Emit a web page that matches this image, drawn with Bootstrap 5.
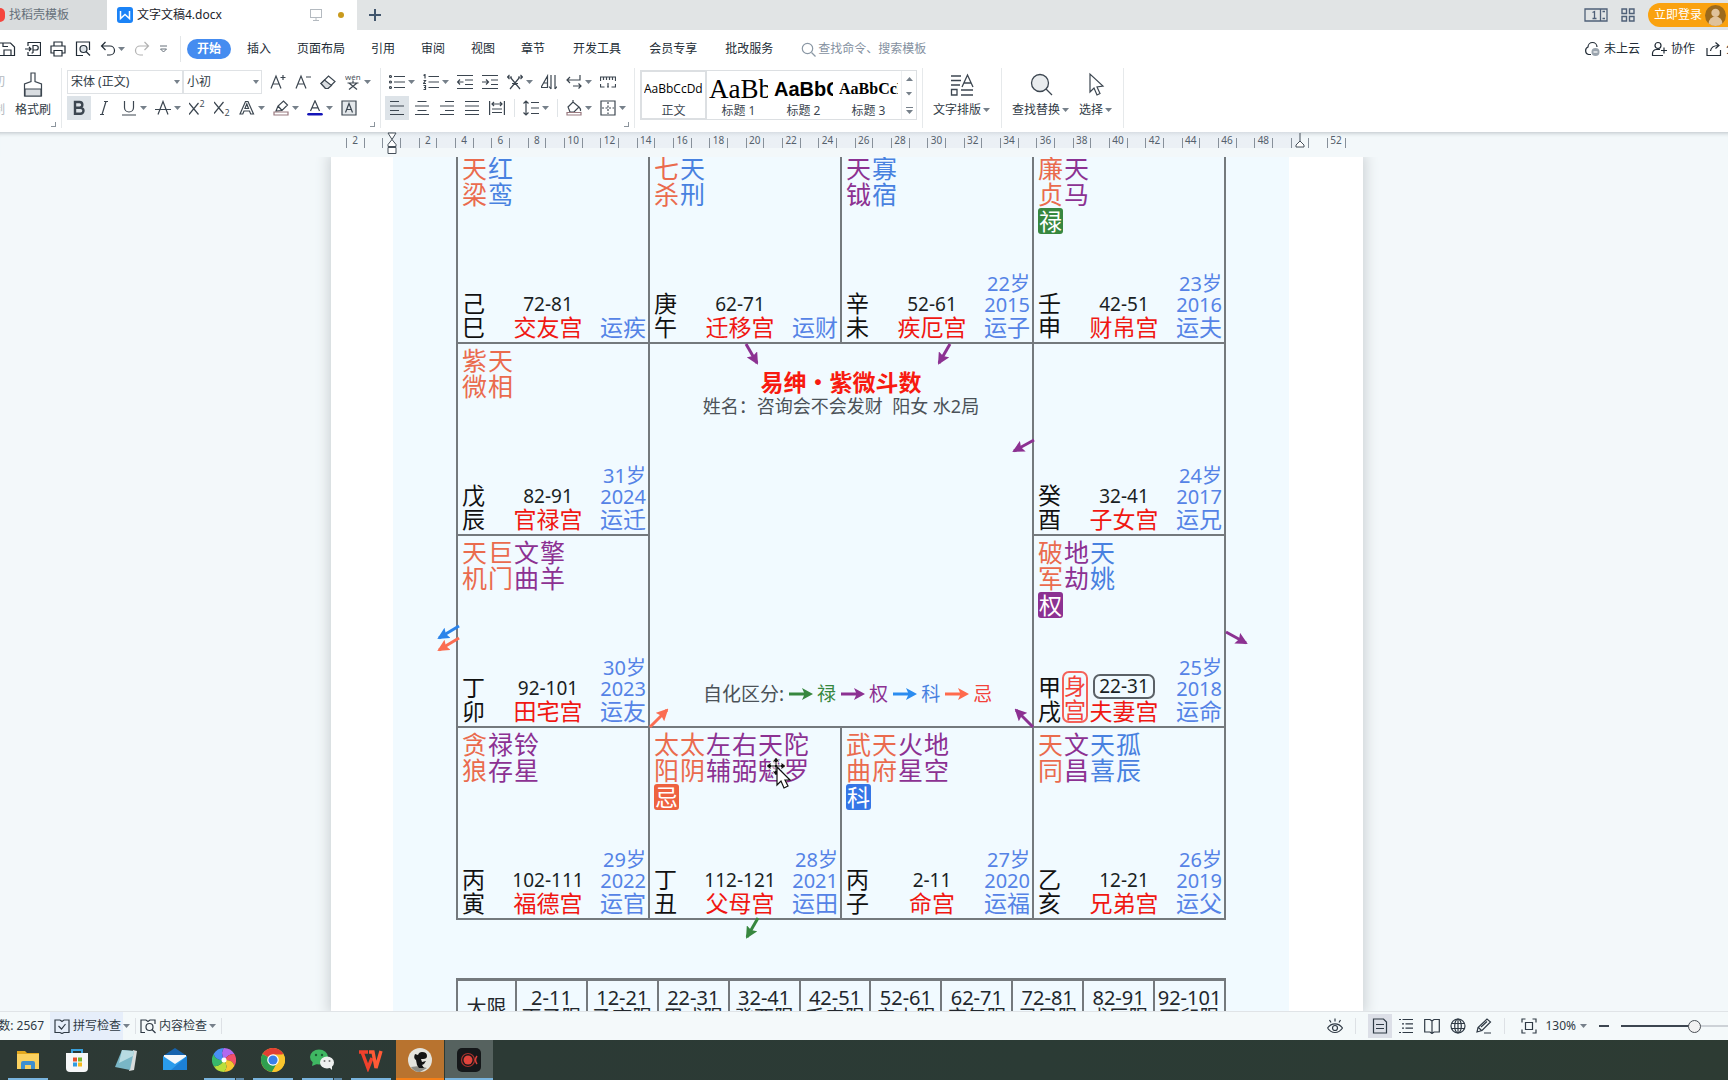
<!DOCTYPE html>
<html lang="zh-CN">
<head>
<meta charset="utf-8">
<meta name="viewport" content="width=device-width, initial-scale=1">
<title>文字文稿4.docx</title>
<link rel="stylesheet" href="https://cdn.jsdelivr.net/npm/bootstrap@5.3.0/dist/css/bootstrap.min.css">
<script src="https://cdn.jsdelivr.net/npm/bootstrap@5.3.0/dist/js/bootstrap.bundle.min.js"></script>
<style>
  body { font: 12px/16px "Noto Sans", "Noto Sans CJK SC", sans-serif; color: #2f3a45; background: #fff; overflow: hidden; }
  a { color: inherit; text-decoration: none; }
  button { border: 0; background: none; padding: 0; color: inherit; }
  svg { display: block; flex: none; }
  .ic { width: 16px; height: 16px; fill: none; stroke: currentColor; stroke-width: 1.2; }
  .ic text { font-family: "Open Sans", sans-serif; fill: currentColor; stroke: none; }
  .dn { width: 7px; height: 4px; background: #76808a; clip-path: polygon(0 0, 100% 0, 50% 100%); flex: none; }
  .up { transform: rotate(180deg); }

  /* title bar */
  .titlebar { height: 30px; background: #e1e4e5; flex: none; }
  .doc-tab { height: 30px; }
  .tab-home { width: 107px; background: #d9dcdd; color: #66707a; gap: 4px; }
  .tab-home .dot { width: 5px; height: 14px; background: #f5453d; border-radius: 0 7px 7px 0; }
  .tab-doc { width: 250px; background: #fff; color: #1c232b; padding: 0 13px 0 10px; }
  .unsaved { width: 6px; height: 6px; border-radius: 50%; background: #c99a1d; }
  .win-tools { gap: 13px; }
  .login { height: 24px; background: #faa20f; color: #fff; border-radius: 12px 0 0 12px; padding: 0 2px 0 6px; gap: 3px; }

  /* menu row */
  .menubar { height: 38px; flex: none; color: #222c36; }
  .quick { width: 181px; border-right: 1px solid #e3e6e8; height: 26px; gap: 9px; }
  .quick .undo { gap: 2px; }
  .menu-tabs { gap: 6px; margin-left: 6px; }
  .menu-more { gap: 8px; margin-left: 8px; }
  .menubar .nav-link { padding: 2px 10px; border-radius: 10px; color: #222c36; line-height: 16px; }
  .menubar .nav-link.active { background: #458cf0; color: #fff; font-weight: 700; }
  .search-box { margin-left: 18px; color: #8b98a5; gap: 2px; }
  .search-box input { border: 0; padding: 0; width: 112px; font-size: 12px; outline: 0; }
  .search-box input::placeholder { color: #8490a0; opacity: 1; }
  .menu-right { gap: 11px; width: 144px; overflow: hidden; }
  .menu-right button { gap: 4px; white-space: nowrap; flex: none; }

  /* ribbon */
  .ribbon { height: 64px; flex: none; overflow: hidden; color: #3c4650; }
  .grp { height: 60px; border-right: 1px solid #e6e9eb; padding: 2px 5px 0; position: relative; flex: none; }
  .grp-clip { width: 62px; padding: 2px 0 0; gap: 10px; }
  .grp-font { padding-right: 6px; }
  .grp-para { padding-left: 4px; }
  .grp-wide { padding: 2px 11px 0 10px; gap: 10px; }
  .grp-corner::after { content: ""; position: absolute; right: 5px; bottom: 1px; width: 5px; height: 5px; border: solid #8b949c; border-width: 0 1px 1px 0; }
  .tool-row { gap: 1px; height: 24px; }
  .tool-row + .tool-row { margin-top: 2px; }
  .tb { height: 24px; padding: 0 4px; display: flex; align-items: center; }
  .tb.drop { padding-right: 3px; gap: 3px; }
  .tb.on { background: #dde3e8; }
  .rule { width: 8px; height: 18px; background: linear-gradient(#e0e4e7, #e0e4e7) center / 1px 100% no-repeat; }
  .pick { position: relative; height: 24px; }
  .pick::after { content: ""; position: absolute; right: 3px; top: 10px; border: 3px solid transparent; border-top: 4px solid #76808a; border-bottom: 0; }
  .pick select { appearance: none; width: 100%; height: 24px; border: 1px solid #dfe2e5; background: #fff; padding: 0 3px; font-size: 12px; color: #2f3a45; }
  .pick-font { width: 116px; }
  .pick-size { width: 79px; margin-left: -1px; margin-right: 3px; }
  .cutoff { color: #b4babf; width: 5px; overflow: hidden; direction: rtl; white-space: nowrap; padding: 0; }
  .big { display: flex; flex-direction: column; align-items: center; gap: 5px; padding-top: 2px; color: #2f3a45; }
  .big .cap { display: flex; align-items: center; gap: 2px; line-height: 16px; }
  .gallery { width: 277px; height: 50px; border: 1px solid #dcdfe2; }
  .look { width: 65px; height: 48px; overflow: hidden; padding: 0 3px; }
  .look.on { outline: 2px solid #dcdfe2; outline-offset: -1px; }
  .look .sample { height: 32px; color: #000; overflow: hidden; white-space: nowrap; text-align: left; display: block; }
  .look .lbl { display: block; line-height: 14px; text-align: center; }
  .smp1 { font: 12px/34px "Open Sans", sans-serif; }
  .smp2 { font: 27px/34px "Liberation Serif", serif; }
  .smp3 { font: bold 20px/34px "Liberation Sans", sans-serif; }
  .smp4 { font: bold 16px/34px "Liberation Serif", serif; }
  .gal-nav { width: 15px; border-left: 1px solid #eceef0; }

  /* ruler and workspace */
  .desk { background: #f3f8fa; padding-right: 34px; }
  .ruler-strip { height: 25px; flex: none; box-shadow: inset 0 5px 4px -4px #b9c0c5; }
  .ruler { width: 1032px; height: 16px; padding-left: 15px; position: relative;
           background: linear-gradient(#e3e8f080, #e3e8f080) 62px 0 / 907px 100% no-repeat; }
  .ruler span { flex: 1; height: 10px; margin-top: 6px; font-size: 10px; line-height: 5px; color: #55606c; padding-right: 18px; text-align: center;
                background: linear-gradient(#87909a, #87909a) 0 0 / 1px 100% no-repeat, linear-gradient(#87909a, #87909a) 50% 0 / 1px 100% no-repeat; }
  .stop { position: absolute; top: 0; color: #46505a; }
  .stop-l { left: 55px; } .stop-r { left: 963px; }
  .work { overflow: hidden; min-height: 0; }
  .paper { width: 1032px; background: #fff; padding: 0 74px 0 62px; box-shadow: 0 0 12px 3px #cfd4d7; }
  .scan { background: #f1faff; padding: 0 63px; height: 100%; overflow: hidden; }

  /* star chart */
  .chart { position: relative; margin-top: -7px; display: grid; grid-template-columns: repeat(4, 192px); grid-template-rows: repeat(4, 192px);
           width: 770px; border: solid #74797d; border-width: 0 2px 2px 0; }
  .house { border: solid #74797d; border-width: 2px 0 0 2px; padding: 3px 2px 3px 4px; display: flex; flex-direction: column; justify-content: space-between; }
  .court { grid-area: 2 / 2 / 4 / 4; border: solid #74797d; border-width: 2px 0 0 2px; padding: 25px 0 19px; display: flex; flex-direction: column; }
  .star { width: 26px; font-size: 25px; line-height: 26px; }
  .hua { display: block; width: 25px; height: 26px; margin-top: 1px; border-radius: 3px; color: #fff; font-size: 23px; text-align: center; }
  .c-or { color: #ea6b4e; } .c-pu { color: #8c3192; } .c-bl { color: #4881e0; } .c-gr { color: #37873f; } .c-rd { color: #f3423a; }
  .b-gr { background: #37873f; } .b-pu { background: #8c3192; } .b-bl { background: #3576e6; } .b-or { background: #ee623f; }
  .foot { display: grid; grid-template-columns: 24px 26px 72px 62px; align-items: end; }
  .stem { font-size: 23px; line-height: 24px; color: #111; }
  .body-mark { border: 2px solid #f5625a; border-radius: 7px; color: #f3423a; font-size: 22px; line-height: 24px; height: 52px; text-align: center; }
  .mid { text-align: center; color: #f01712; font-size: 23px; line-height: 23px; white-space: nowrap; }
  .span { display: block; color: #1a1f24; font-size: 19px; }
  .ringed { outline: 2px solid #5b6167; border-radius: 5px; margin: 0 7px 3px; line-height: 21px; }
  .yr { text-align: right; color: #5583e6; font-size: 20px; line-height: 21px; white-space: nowrap; }
  .yr b { display: block; font-weight: 400; font-size: 23px; line-height: 24px; }
  .chart-title { color: #f81a10; font: bold 23px/24px "Noto Sans CJK SC", sans-serif; margin: 0; }
  .chart-sub { font-size: 18px; line-height: 26px; color: #4b5258; white-space: pre; }
  .legend { font-size: 19px; line-height: 26px; color: #4b5258; padding-left: 53px; gap: 5px; }
  .legend > span { display: flex; align-items: center; gap: 4px; }
  .over { position: absolute; left: 0; top: 0; overflow: visible; }
  .limits { margin-top: 58px; width: 770px; table-layout: fixed; border-collapse: collapse; font-size: 20px; line-height: 20px; color: #22272c; text-align: center; }
  .limits th { width: 59px; font-weight: 400; }
  .limits th, .limits td { border: 2px solid #74797d; border-top-width: 3px; padding: 7px 0; white-space: nowrap; }

  /* status bar */
  .status { height: 29px; flex: none; background: #f4f9fa; border-top: 1px solid #e0e4e7; overflow: hidden; }
  .words { width: 50px; direction: rtl; white-space: nowrap; overflow: hidden; padding-right: 6px; }
  .chk { height: 28px; padding: 0 2px 0 4px; gap: 3px; }
  .chk.on { background: #e6eefa; }
  .vline { width: 1px; height: 16px; background: #dde1e5; }
  .chk + .dn { margin-right: 5px; }
  .view { width: 24px; height: 24px; display: flex; align-items: center; justify-content: center; }
  .view.on { background: #dcdfe7; }
  .views { gap: 2px; }
  .zoomer { appearance: none; width: 107px; height: 14px; margin: 0; background: linear-gradient(90deg, #3c4650 72px, #cdd2d7 72px) center / 100% 2px no-repeat; }
  .zoomer::-webkit-slider-thumb { appearance: none; width: 13px; height: 13px; border-radius: 50%; background: #f2f2f2; border: 1px solid #4a4f55; }

  /* taskbar */
  .taskbar { height: 40px; flex: none; background: linear-gradient(90deg, #2d3935, #2b3b35 60%, #2d3b33); padding-left: 4px; gap: 1px; }
  .app { width: 48px; height: 40px; display: flex; align-items: center; justify-content: center; position: relative; }
  .app svg { width: 24px; height: 24px; }
  .run::after { content: ""; position: absolute; left: 4px; right: 4px; bottom: 0; height: 2px; background: #79b4de; }
  .multi::after { background: linear-gradient(90deg, #79b4de 31px, #2d3935 31px 32px, #5b87a6 32px); }
  .hot { background: #b8732f; } .hot::after { left: 0; right: 0; background: #f57f17; }
  .cur { background: #56625f; } .cur::after { left: 0; right: 0; }
</style>
</head>
<body class="d-flex flex-column vh-100">

<header class="titlebar d-flex align-items-center">
  <a href="#" class="doc-tab tab-home d-flex align-items-center"><span class="dot"></span>找稻壳模板</a>
  <a href="#" class="doc-tab tab-doc d-flex align-items-center">
    <svg width="16" height="16" viewBox="0 0 16 16"><rect width="16" height="16" rx="3" fill="#1b83f7"/><path d="M3.500 4v7.500l4.500-4 4.500 4V4" fill="none" stroke="#fff" stroke-width="1.500"/></svg>
    <span class="ms-1 me-auto">文字文稿4.docx</span>
    <svg class="me-3" width="12" height="12" viewBox="0 0 12 12" fill="none" stroke="#b4bac0"><rect x=".5" y=".5" width="11" height="8"/><path d="M6 9v2.500M3 11.500h6"/></svg>
    <span class="unsaved"></span>
  </a>
  <button class="ms-2 px-1" aria-label="新建"><svg width="12" height="12" viewBox="0 0 12 12" stroke="#42566d" stroke-width="2"><path d="M6 0v12M0 6h12"/></svg></button>
  <div class="win-tools ms-auto d-flex align-items-center">
    <button aria-label="窗口布局"><svg width="24" height="14" viewBox="0 0 24 14" fill="none" stroke="#4f6078" stroke-width="1.300"><path d="M1 1h22v12H1z"/><path d="M8.500 4.500l2-1v7M8.500 10.500h4M16.500 1v12"/><path d="M18.500 3.500h2.500M18.500 10.500h2.500"/></svg></button>
    <button aria-label="应用"><svg width="14" height="14" viewBox="0 0 14 14" fill="none" stroke="#4f6078" stroke-width="1.400"><path d="M1 1h4.500v4.500H1zM8.500 1H13v4.500H8.500zM1 8.500h4.500V13H1zM8.500 8.500H13V13H8.500z"/></svg></button>
    <button class="login d-flex align-items-center">立即登录
      <svg width="21" height="21" viewBox="0 0 20 20"><circle cx="10" cy="10" r="10" fill="#9c6a1c"/><circle cx="10" cy="7.500" r="4" fill="#dfc29a"/><path d="M3.500 17.500a6.500 6.500 0 0 1 13 0A10 10 0 0 1 3.500 17.500z" fill="#dfc29a"/></svg></button>
  </div>
</header>

<nav class="menubar d-flex align-items-center">
  <div class="quick d-flex align-items-center">
    <button aria-label="保存"><svg class="ic" viewBox="0 0 16 16"><path d="M0 2h10.500L14.500 6v8.500H0M4 14V9h7v5M3 2v3.500h5"/></svg></button>
    <button aria-label="输出"><svg class="ic" viewBox="0 0 16 16"><path d="M3 5V1.500h12.500v13H3V11M0 8h6M4 6l2 2-2 2M8 12V4.500h3a2.200 2.200 0 0 1 0 4.500H8M8 12H6.500"/></svg></button>
    <button aria-label="打印"><svg class="ic" viewBox="0 0 16 16"><path d="M4 5V1h8v4M4 12H1V5h14v7h-3M4 9.500h8V15H4z"/></svg></button>
    <button aria-label="预览"><svg class="ic" viewBox="0 0 16 16"><path d="M8 14.500H1.500V1h13v8"/><circle cx="8.500" cy="8" r="3.500" fill="#dde3e8"/><path d="M11 10.500l4 4"/></svg></button>
    <button class="undo d-flex align-items-center" aria-label="撤销"><svg class="ic" viewBox="0 0 16 16"><path d="M5.500 1L1.500 5l4 4M1.500 5H10a4.500 4.500 0 0 1 0 9H7"/></svg><span class="dn"></span></button>
    <button aria-label="恢复"><svg class="ic text-black-50" viewBox="0 0 16 16" opacity=".6"><path d="M10.500 1l4 4-4 4M14.500 5H6a4.500 4.500 0 0 0 0 9h3"/></svg></button>
    <button aria-label="更多"><svg width="9" height="9" viewBox="0 0 9 9" fill="none" stroke="#66707a"><path d="M1 1h7M1.500 4h6L4.500 7z"/></svg></button>
  </div>
  <div class="menu-tabs nav flex-nowrap">
    <a href="#" class="nav-link active">开始</a><a href="#" class="nav-link">插入</a><a href="#" class="nav-link">页面布局</a><a href="#" class="nav-link">引用</a><a href="#" class="nav-link">审阅</a><a href="#" class="nav-link">视图</a><a href="#" class="nav-link">章节</a>
  </div>
  <div class="menu-more nav flex-nowrap">
    <a href="#" class="nav-link">开发工具</a><a href="#" class="nav-link">会员专享</a><a href="#" class="nav-link">批改服务</a>
  </div>
  <label class="search-box d-flex align-items-center">
    <svg width="15" height="15" viewBox="0 0 15 15" fill="none" stroke="#8b98a5" stroke-width="1.200"><circle cx="6.500" cy="6.500" r="5.200"/><path d="M10.500 10.500l4 4"/></svg>
    <input type="text" placeholder="查找命令、搜索模板" aria-label="查找命令、搜索模板">
  </label>
  <div class="menu-right d-flex align-items-center ms-auto">
    <button class="d-flex align-items-center"><svg class="ic" viewBox="0 0 16 16"><path d="M7 13.500H4.500a4 4 0 0 1-.5-7.500 4.500 4.500 0 0 1 9 0"/><circle cx="11.500" cy="11" r="4" fill="#9aa4ae" stroke="none"/><path d="M9.500 11h4" stroke="#fff"/></svg>未上云</button>
    <button class="d-flex align-items-center"><svg class="ic" viewBox="0 0 16 16"><circle cx="7" cy="4.500" r="3"/><path d="M12 14.500H1.500v-2a4 4 0 0 1 4-4H9M13 6.500v6M10 9.500h6"/></svg>协作</button>
    <button class="d-flex align-items-center"><svg class="ic" viewBox="0 0 16 16"><path d="M1 7v7.500h13.500V9M4.500 10c.5-3.500 3-5.500 8-5.500M9.500 1.500l3.500 3-3.500 3"/></svg>分享</button>
  </div>
</nav>

<section class="ribbon d-flex">
  <div class="grp grp-corner grp-clip d-flex">
    <div class="d-flex flex-column"><button class="tb cutoff">剪切</button><button class="tb cutoff mt-1">复制</button></div>
    <button class="big"><svg width="20" height="25" viewBox="0 0 20 25" fill="none" stroke="#3c4650" stroke-width="1.200"><path d="M8 1h4v8.500l6.500 2.500v12h-17V12L8 9.500z"/><path d="M2 17h16v7H2z" fill="#d9dde1"/></svg><span>格式刷</span></button>
  </div>

  <div class="grp grp-corner grp-font">
    <div class="tool-row d-flex">
      <div class="pick pick-font"><select aria-label="字体"><option>宋体 (正文)</option></select></div>
      <div class="pick pick-size"><select aria-label="字号"><option>小初</option></select></div>
      <button class="tb" aria-label="增大字号"><svg class="ic" viewBox="0 0 16 16"><path d="M1 14.500L6 2l5 12.500M3 10h6.500M13 1v5M10.500 3.500h5"/></svg></button>
      <button class="tb" aria-label="减小字号"><svg class="ic" viewBox="0 0 16 16"><path d="M1 14.500L6 2l5 12.500M3 10h6.500M11 3h5"/></svg></button>
      <button class="tb" aria-label="清除格式"><svg class="ic" viewBox="0 0 16 16"><path d="M1 9.500L8.500 2 15 7.500 8 14.500H5.500z"/><path d="M1 9.500L4.500 6 11.500 11.500 8 14.500H5.500z" fill="#d9dde1"/></svg></button>
      <button class="tb drop" aria-label="拼音指南"><svg class="ic" viewBox="0 0 16 16"><text x="0" y="6" font-size="8">wén</text><path d="M8 6.500v2M2.500 9h11M4 9l8 6.500M12 9l-8 6.500"/></svg><span class="dn"></span></button>
    </div>
    <div class="tool-row d-flex">
      <button class="tb on" aria-label="加粗"><svg class="ic" viewBox="0 0 16 16"><path d="M4 2h4.500a2.800 2.800 0 0 1 0 5.700H4zM4 7.700h5.500a3 3 0 0 1 0 6H4z" stroke-width="2.400"/></svg></button>
      <button class="tb" aria-label="斜体"><svg class="ic" viewBox="0 0 16 16"><path d="M8 1.500h4M4 14.500h4M10 1.500l-4 13"/></svg></button>
      <button class="tb drop" aria-label="下划线"><svg class="ic" viewBox="0 0 16 16"><path d="M3.500 1v6.500a4.500 4.500 0 0 0 9 0V1M1 15h14"/></svg><span class="dn"></span></button>
      <button class="tb drop" aria-label="删除线"><svg class="ic" viewBox="0 0 16 16"><path d="M3 14.500L8 1.500l5 13M0 9.500h16"/></svg><span class="dn"></span></button>
      <button class="tb" aria-label="上标"><svg class="ic" viewBox="0 0 16 16"><path d="M0 3l9.500 11.500M9.500 3L0 14.500"/><text x="10.500" y="7" font-size="9">2</text></svg></button>
      <button class="tb" aria-label="下标"><svg class="ic" viewBox="0 0 16 16"><path d="M0 2l9.500 11.500M9.500 2L0 13.500"/><text x="10.500" y="16" font-size="9">2</text></svg></button>
      <button class="tb drop" aria-label="文字效果"><svg class="ic" viewBox="0 0 16 16"><path d="M1 14L6.500 1.500h2.500L14.500 14h-2.800L10.500 11H5l-1.200 3zM6 8.500h3.500L7.800 4z"/></svg><span class="dn"></span></button>
      <button class="tb drop" aria-label="突出显示"><svg class="ic" viewBox="0 0 16 16"><path d="M3 11l2-5 5.500-5 4 4L9 10.500zM5 6l4 4.500"/><path d="M1 12h14v3H1z" stroke="#9a7a80"/></svg><span class="dn"></span></button>
      <button class="tb drop" aria-label="字体颜色"><svg class="ic" viewBox="0 0 16 16"><path d="M3.500 11L8 .8 12.500 11M5 7.800h6"/><path d="M1.500 14.200h13" stroke="#1414b8" stroke-width="2.600" stroke-linecap="round"/></svg><span class="dn"></span></button>
      <button class="tb" aria-label="字符底纹"><svg class="ic" viewBox="0 0 16 16"><path d="M1 1h14v14H1z" fill="#e4e8eb"/><path d="M4.500 12.500L8 3.500l3.500 9M5.500 9.500h5"/></svg></button>
    </div>
  </div>

  <div class="grp grp-corner grp-para">
    <div class="tool-row d-flex">
      <button class="tb drop" aria-label="项目符号"><svg class="ic" viewBox="0 0 16 16"><path d="M5 2.500h11M5 8h11M5 13.500h11"/><circle cx="1.500" cy="2.500" r="1"/><circle cx="1.500" cy="8" r="1"/><circle cx="1.500" cy="13.500" r="1"/></svg><span class="dn"></span></button>
      <button class="tb drop" aria-label="编号"><svg class="ic" viewBox="0 0 16 16"><path d="M5.500 2.500H16M5.500 8H16M5.500 13.500H16M.5 1.500l1.500-1v4M.5 6.500h2L.5 9.500h2.500M.5 11.500h2v4h-2M1 13.500h1.500"/></svg><span class="dn"></span></button>
      <button class="tb" aria-label="减少缩进"><svg class="ic" viewBox="0 0 16 16"><path d="M0 1.500h16M8 6h8M8 10.500h8M0 14.500h16M6.500 8H.5M3 5.500L.5 8 3 10.500"/></svg></button>
      <button class="tb" aria-label="增加缩进"><svg class="ic" viewBox="0 0 16 16"><path d="M0 1.500h16M9 6h7M9 10.500h7M0 14.500h16M0 8h6.500M4 5.500L6.500 8 4 10.500"/></svg></button>
      <button class="tb drop" aria-label="中文版式"><svg class="ic" viewBox="0 0 16 16"><path d="M3 15L12.500 3.500M3.500 3.500L13 15M5 9.500h6M0 3h5M2.500.8L.5 3l2 2.200M11 3h5M13.500.8l2 2.200-2 2.200"/></svg><span class="dn"></span></button>
      <button class="tb" aria-label="排序"><svg class="ic" viewBox="0 0 16 16"><path d="M0 13.500L6.500 2v11.500zM3 9h3.500M10 1v14M10 15l-2-2.500M14 1v14M14 15l2-2.500"/></svg></button>
      <button class="tb drop" aria-label="显示标记"><svg class="ic" viewBox="0 0 16 16"><path d="M14 1v5H1M4 3L1 6l3 3M7 12h8M12.500 9.500L15 12l-2.500 2.500"/></svg><span class="dn"></span></button>
      <button class="tb" aria-label="制表位"><svg class="ic" viewBox="0 0 16 16"><path d="M.5 7V3h15v4M3.500 3v3M6.500 3v3M9.500 3v3M12.500 3v3M.5 10v3h4M7 13h2M11.500 13h4v-3M8 9v4"/></svg></button>
    </div>
    <div class="tool-row d-flex align-items-center">
      <button class="tb on" aria-label="左对齐"><svg class="ic" viewBox="0 0 16 16"><path d="M1 1.500h9M1 6h14M1 10.500h9M1 14.500h14"/></svg></button>
      <button class="tb" aria-label="居中"><svg class="ic" viewBox="0 0 16 16"><path d="M3.500 1.500h9M1 6h14M3.500 10.500h9M1 14.500h14"/></svg></button>
      <button class="tb" aria-label="右对齐"><svg class="ic" viewBox="0 0 16 16"><path d="M6 1.500h9M1 6h14M6 10.500h9M1 14.500h14"/></svg></button>
      <button class="tb" aria-label="两端对齐"><svg class="ic" viewBox="0 0 16 16"><path d="M1 1.500h14M1 6h14M1 10.500h14M1 14.500h14"/></svg></button>
      <button class="tb" aria-label="分散对齐"><svg class="ic" viewBox="0 0 16 16"><path d="M.6 1v14M15.400 1v14M3 4h10M5 2L3 4l2 2M11 2l2 2-2 2M3 9h10M3 12.500h10"/></svg></button>
      <span class="rule"></span>
      <button class="tb drop" aria-label="行距"><svg class="ic" viewBox="0 0 16 16"><path d="M3 1v14M.5 3.500L3 1l2.500 2.500M.5 12.500L3 15l2.500-2.500M8 2.500h8M8 8h8M8 13.500h8"/></svg><span class="dn"></span></button>
      <span class="rule"></span>
      <button class="tb drop" aria-label="底纹"><svg class="ic" viewBox="0 0 16 16"><path d="M2 7l5-5 6 5-5 5H4zM7 2V0M13 7c2 2 1.500 4 1.500 4"/><path d="M1 12.500h14V15H1z" stroke="#9a7a80"/></svg><span class="dn"></span></button>
      <button class="tb drop" aria-label="边框"><svg class="ic" viewBox="0 0 16 16"><path d="M1 1h14v14H1z"/><path d="M8 2v12M2 8h12" stroke-dasharray="2 1.500"/></svg><span class="dn"></span></button>
    </div>
  </div>

  <div class="grp">
    <div class="gallery d-flex">
      <button class="look on"><span class="sample smp1">AaBbCcDd</span><span class="lbl">正文</span></button>
      <button class="look"><span class="sample smp2">AaBb</span><span class="lbl">标题 1</span></button>
      <button class="look"><span class="sample smp3">AaBbC</span><span class="lbl">标题 2</span></button>
      <button class="look"><span class="sample smp4">AaBbCcD</span><span class="lbl">标题 3</span></button>
      <div class="gal-nav d-flex flex-column justify-content-around align-items-center"><span class="dn up"></span><span class="dn"></span><svg width="7" height="7" viewBox="0 0 7 7" fill="#76808a"><path d="M0 0h7v1H0zM0 3h7L3.500 7z"/></svg></div>
    </div>
  </div>

  <div class="grp grp-wide">
    <button class="big"><svg width="24" height="25" viewBox="0 0 24 25" fill="none" stroke="#3c4650" stroke-width="1.300"><path d="M1 4h10M1 8.500h10M1 13h9M1.500 17.500h5.500v5.500H1.500zM11 18h12M11 23h12M12 15l5.500-12L23 15M14 11h7"/></svg><span class="cap">文字排版<i class="dn"></i></span></button>
  </div>
  <div class="grp grp-wide d-flex">
    <button class="big"><svg width="24" height="25" viewBox="0 0 24 25" fill="none" stroke="#3c4650" stroke-width="1.300"><circle cx="11" cy="11" r="8.500" fill="#e9ecee"/><path d="M17 17l6 6"/></svg><span class="cap">查找替换<i class="dn"></i></span></button>
    <button class="big"><svg width="18" height="25" viewBox="0 0 18 25" fill="none" stroke="#3c4650" stroke-width="1.200"><path d="M3 2v18l4-4 3 7 3-1.500-3-6.500 6-1z"/></svg><span class="cap">选择<i class="dn"></i></span></button>
  </div>
</section>

<div class="desk ruler-strip d-flex justify-content-center">
  <div class="ruler d-flex">
    <span>2</span><span></span><span>2</span><span>4</span><span>6</span><span>8</span><span>10</span><span>12</span><span>14</span><span>16</span><span>18</span><span>20</span><span>22</span><span>24</span><span>26</span><span>28</span><span>30</span><span>32</span><span>34</span><span>36</span><span>38</span><span>40</span><span>42</span><span>44</span><span>46</span><span>48</span><span></span><span>52</span>
    <svg class="stop stop-l" width="12" height="23" viewBox="0 0 12 23" fill="#fff" stroke="#46505a"><path d="M2 1h8L6 7.500zM6 7.500l4 5v2H2v-2zM2 15.500h8v6H2z"/></svg>
    <svg class="stop stop-r" width="12" height="16" viewBox="0 0 12 16" fill="#fff" stroke="#46505a"><path d="M6 1v8l4 4v2H2v-2l4-4"/></svg>
  </div>
</div>

<main class="desk work flex-grow-1 d-flex justify-content-center">
  <article class="paper">
    <div class="scan">
      <div class="chart">
        <div class="house">
          <div class="d-flex"><div class="star c-or">天梁</div><div class="star c-bl">红鸾</div></div>
          <div class="foot"><div class="stem">己巳</div><i></i><div class="mid"><span class="span">72-81</span>交友宫</div><div class="yr"><b>运疾</b></div></div>
        </div>
        <div class="house">
          <div class="d-flex"><div class="star c-or">七杀</div><div class="star c-bl">天刑</div></div>
          <div class="foot"><div class="stem">庚午</div><i></i><div class="mid"><span class="span">62-71</span>迁移宫</div><div class="yr"><b>运财</b></div></div>
        </div>
        <div class="house">
          <div class="d-flex"><div class="star c-pu">天钺</div><div class="star c-bl">寡宿</div></div>
          <div class="foot"><div class="stem">辛未</div><i></i><div class="mid"><span class="span">52-61</span>疾厄宫</div><div class="yr">22岁<br>2015<b>运子</b></div></div>
        </div>
        <div class="house">
          <div class="d-flex"><div class="star c-or">廉贞<span class="hua b-gr">禄</span></div><div class="star c-pu">天马</div></div>
          <div class="foot"><div class="stem">壬申</div><i></i><div class="mid"><span class="span">42-51</span>财帛宫</div><div class="yr">23岁<br>2016<b>运夫</b></div></div>
        </div>

        <div class="house">
          <div class="d-flex"><div class="star c-or">紫微</div><div class="star c-or">天相</div></div>
          <div class="foot"><div class="stem">戊辰</div><i></i><div class="mid"><span class="span">82-91</span>官禄宫</div><div class="yr">31岁<br>2024<b>运迁</b></div></div>
        </div>
        <div class="court">
          <h1 class="chart-title text-center">易绅・紫微斗数</h1>
          <div class="chart-sub text-center">姓名：咨询会不会发财  阳女 水2局</div>
          <div class="legend d-flex align-items-center mt-auto">
            <span>自化区分:</span>
            <span class="c-gr"><svg width="24" height="12" viewBox="0 0 24 12"><path d="M0 4.500h15L13 0l11 6-11 6 2-4.500H0z" fill="currentColor"/></svg>禄</span>
            <span class="c-pu"><svg width="24" height="12" viewBox="0 0 24 12"><path d="M0 4.500h15L13 0l11 6-11 6 2-4.500H0z" fill="currentColor"/></svg>权</span>
            <span class="c-bl"><svg width="24" height="12" viewBox="0 0 24 12"><path d="M0 4.500h15L13 0l11 6-11 6 2-4.500H0z" fill="#2b8cf0"/></svg>科</span>
            <span class="c-rd"><svg width="24" height="12" viewBox="0 0 24 12"><path d="M0 4.500h15L13 0l11 6-11 6 2-4.500H0z" fill="#ff6a4d"/></svg>忌</span>
          </div>
        </div>
        <div class="house">
          <div></div>
          <div class="foot"><div class="stem">癸酉</div><i></i><div class="mid"><span class="span">32-41</span>子女宫</div><div class="yr">24岁<br>2017<b>运兄</b></div></div>
        </div>

        <div class="house">
          <div class="d-flex"><div class="star c-or">天机</div><div class="star c-or">巨门</div><div class="star c-pu">文曲</div><div class="star c-pu">擎羊</div></div>
          <div class="foot"><div class="stem">丁卯</div><i></i><div class="mid"><span class="span">92-101</span>田宅宫</div><div class="yr">30岁<br>2023<b>运友</b></div></div>
        </div>
        <div class="house">
          <div class="d-flex"><div class="star c-or">破军<span class="hua b-pu">权</span></div><div class="star c-pu">地劫</div><div class="star c-bl">天姚</div></div>
          <div class="foot"><div class="stem">甲戌</div><div class="body-mark">身宫</div><div class="mid"><span class="span ringed">22-31</span>夫妻宫</div><div class="yr">25岁<br>2018<b>运命</b></div></div>
        </div>

        <div class="house">
          <div class="d-flex"><div class="star c-or">贪狼</div><div class="star c-pu">禄存</div><div class="star c-pu">铃星</div></div>
          <div class="foot"><div class="stem">丙寅</div><i></i><div class="mid"><span class="span">102-111</span>福德宫</div><div class="yr">29岁<br>2022<b>运官</b></div></div>
        </div>
        <div class="house">
          <div class="d-flex"><div class="star c-or">太阳<span class="hua b-or">忌</span></div><div class="star c-or">太阴</div><div class="star c-pu">左辅</div><div class="star c-pu">右弼</div><div class="star c-pu">天魁</div><div class="star c-pu">陀罗</div></div>
          <div class="foot"><div class="stem">丁丑</div><i></i><div class="mid"><span class="span">112-121</span>父母宫</div><div class="yr">28岁<br>2021<b>运田</b></div></div>
        </div>
        <div class="house">
          <div class="d-flex"><div class="star c-or">武曲<span class="hua b-bl">科</span></div><div class="star c-or">天府</div><div class="star c-pu">火星</div><div class="star c-pu">地空</div></div>
          <div class="foot"><div class="stem">丙子</div><i></i><div class="mid"><span class="span">2-11</span>命宫</div><div class="yr">27岁<br>2020<b>运福</b></div></div>
        </div>
        <div class="house">
          <div class="d-flex"><div class="star c-or">天同</div><div class="star c-pu">文昌</div><div class="star c-bl">天喜</div><div class="star c-bl">孤辰</div></div>
          <div class="foot"><div class="stem">乙亥</div><i></i><div class="mid"><span class="span">12-21</span>兄弟宫</div><div class="yr">26岁<br>2019<b>运父</b></div></div>
        </div>

        <!-- self-transformation arrows and the mouse pointer -->
        <svg class="over" width="770" height="770" viewBox="0 0 770 770" fill="none" stroke-width="3">
          <defs>
            <marker id="mp" markerUnits="userSpaceOnUse" markerWidth="12" markerHeight="12" refX="10" refY="6" orient="auto"><path d="M0 0l12 6-12 6 2-6z" fill="#8c3192"/></marker>
            <marker id="mb" markerUnits="userSpaceOnUse" markerWidth="12" markerHeight="12" refX="10" refY="6" orient="auto"><path d="M0 0l12 6-12 6 2-6z" fill="#2b84ea"/></marker>
            <marker id="mo" markerUnits="userSpaceOnUse" markerWidth="12" markerHeight="12" refX="10" refY="6" orient="auto"><path d="M0 0l12 6-12 6 2-6z" fill="#fb6d52"/></marker>
            <marker id="mg" markerUnits="userSpaceOnUse" markerWidth="12" markerHeight="12" refX="10" refY="6" orient="auto"><path d="M0 0l12 6-12 6 2-6z" fill="#37873f"/></marker>
          </defs>
          <path d="M290 194l11 19" stroke="#8c3192" marker-end="url(#mp)"/>
          <path d="M494 194l-11 19" stroke="#8c3192" marker-end="url(#mp)"/>
          <path d="M578 290l-20 11" stroke="#8c3192" marker-end="url(#mp)"/>
          <path d="M3 476l-20 12" stroke="#2b84ea" marker-end="url(#mb)"/>
          <path d="M3 488l-20 12" stroke="#fb6d52" marker-end="url(#mo)"/>
          <path d="M194 577l17-17" stroke="#fb6d52" marker-end="url(#mo)"/>
          <path d="M577 577l-17-17" stroke="#8c3192" marker-end="url(#mp)"/>
          <path d="M770 482l20 11" stroke="#8c3192" marker-end="url(#mp)"/>
          <path d="M302 768l-11 19" stroke="#37873f" marker-end="url(#mg)"/>
          <path d="M320 607l4 5h-3v3h4v-3l5 4-5 4v-3h-4v4h3l-4 5-4-5h3v-4h-4v3l-5-4 5-4v3h4v-3h-3z" fill="#111" stroke="#fff"  stroke-width="1"/>
          <path d="M321 617v18l4-4 3 7 4-2-3-6h5z" fill="#fff" stroke="#111" stroke-width="1.200"/>
        </svg>
      </div>

      <table class="limits">
        <tr><th scope="row">大限</th><td>2-11<br>丙子限</td><td>12-21<br>乙亥限</td><td>22-31<br>甲戌限</td><td>32-41<br>癸酉限</td><td>42-51<br>壬申限</td><td>52-61<br>辛未限</td><td>62-71<br>庚午限</td><td>72-81<br>己巳限</td><td>82-91<br>戊辰限</td><td>92-101<br>丁卯限</td></tr>
      </table>
    </div>
  </article>
</main>

<footer class="status d-flex align-items-center">
  <div class="words"><bdi dir="ltr">字数: 2567</bdi></div>
  <button class="chk on d-flex align-items-center"><svg class="ic" viewBox="0 0 16 16"><path d="M6 2H1v12.500h5l2 1 2-1h5V2h-5L8 3.500 6 2M4.500 8l3 3 4-5"/></svg>拼写检查</button>
  <span class="dn"></span><span class="vline"></span>
  <button class="chk d-flex align-items-center"><svg class="ic" viewBox="0 0 16 16"><path d="M5 14.500H1V2h5l2 1.500L10 2h5v4"/><circle cx="9.500" cy="9" r="3.500"/><path d="M12 11.500l3.500 3.500"/></svg>内容检查</button>
  <span class="dn"></span><span class="vline"></span>
  <div class="ms-auto d-flex align-items-center">
    <button class="view" aria-label="护眼模式"><svg class="ic" viewBox="0 0 16 16"><path d="M.5 10c4-5.500 11-5.500 15 0-4 6-11 6-15 0M8 .5v3M2.500 2l1.500 2.500M13.500 2L12 4.500"/><circle cx="8" cy="10" r="2.500"/></svg></button>
    <span class="vline ms-2 me-2"></span>
    <div class="views d-flex ms-1">
      <button class="view on" aria-label="页面视图"><svg class="ic" viewBox="0 0 16 16"><path d="M1.500 1h10l3 3v11h-13zM4 6.500h8M4 10.500h8"/></svg></button>
      <button class="view" aria-label="大纲"><svg class="ic" viewBox="0 0 16 16"><path d="M1 1.500h2M4.500 1.500H15M4 5.800h2M7.500 5.800H15M4 10.200h2M7.500 10.200H15M1 14.500h2M4.500 14.500H15"/></svg></button>
      <button class="view" aria-label="阅读版式"><svg class="ic" viewBox="0 0 16 16"><path d="M8 3L6 1.500H.7v12.500H6l2 1.500 2-1.500h5.300V1.500H10zM8 3v12"/></svg></button>
      <button class="view" aria-label="Web版式"><svg class="ic" viewBox="0 0 16 16"><circle cx="8" cy="8" r="7"/><ellipse cx="8" cy="8" rx="3.300" ry="7"/><path d="M1.500 5.500h13M1.500 10.500h13M8 1v14"/></svg></button>
      <button class="view" aria-label="写作模式"><svg class="ic" viewBox="0 0 16 16"><path d="M1 14l1-4.500L11 1l3.500 3L6 12.500zM2.500 9.500l3 3M5 9l6-5.500M8 15h7"/></svg></button>
    </div>
    <span class="vline ms-2 me-3"></span>
    <button aria-label="适合页面"><svg class="ic" viewBox="0 0 16 16"><path d="M1 4.500V1h3.500M11.500 1H15v3.500M15 11.500V15h-3.500M4.500 15H1v-3.500M4.500 4.500h7v7h-7z"/></svg></button>
    <button class="ms-2 d-flex align-items-center gap-1">130%<span class="dn"></span></button>
    <button class="mx-2 px-1" aria-label="缩小"><svg width="10" height="2"><rect width="10" height="2" fill="#3c4650"/></svg></button>
    <input class="zoomer" type="range" min="0" max="100" value="71" aria-label="缩放">
  </div>
</footer>

<div class="taskbar d-flex">
  <a href="#" class="app run" aria-label="文件资源管理器"><svg viewBox="0 0 24 24"><path d="M1 3h8l2 2h12v5H1z" fill="#e3a81f"/><path d="M1 6h22v15H1z" fill="#fbd160"/><path d="M5 21v-6q0-2 2-2h10q2 0 2 2v6h-4v-4H9v4z" fill="#3f8fd0"/></svg></a>
  <a href="#" class="app" aria-label="应用商店"><svg viewBox="0 0 24 24"><path d="M7 6V2h10v4" fill="none" stroke="#3aa0dc" stroke-width="2"/><path d="M1 5h22v15q0 4-4 4H5q-4 0-4-4z" fill="#f6f7f8"/><path d="M8 9.500h4v4H8z" fill="#e8502b"/><path d="M13 9.500h4v4h-4z" fill="#7ab62f"/><path d="M8 14.500h4v4H8z" fill="#2f9be0"/><path d="M13 14.500h4v4h-4z" fill="#f7b91a"/></svg></a>
  <a href="#" class="app" aria-label="记事本"><svg viewBox="0 0 24 24"><path d="M19 2l4 1-3 19-5 1z" fill="#d8dcdc"/><path d="M8 2l12 1-4 19L1 19z" fill="#79b6c6"/><path d="M8 2l12 1-1 5L5 15z" fill="#b8dbe2"/></svg></a>
  <a href="#" class="app" aria-label="邮件"><svg viewBox="0 0 24 24"><path d="M0 8L12 0l12 8v14H0z" fill="#1663ae"/><path d="M1 7h22v9H1z" fill="#f4f8fb"/><path d="M0 8l12 8L24 8v14H0z" fill="#2a9cec"/><path d="M24 8L8 22h16z" fill="#1c80d6"/></svg></a>
  <a href="#" class="app run multi" aria-label="浏览器"><svg viewBox="0 0 24 24"><path d="M12 12Q8 4 12 0A12 12 0 0 1 22.400 6Q17 5 12 12z" fill="#b268f0"/><path d="M12 12Q17 5 22.400 6a12 12 0 0 1 0 12Q21 11 12 12z" fill="#f2506a"/><path d="M12 12Q21 11 22.400 18A12 12 0 0 1 12 24Q17 19 12 12z" fill="#f7c531"/><path d="M12 12Q17 19 12 24A12 12 0 0 1 1.600 18Q8 19 12 12z" fill="#b8df3c"/><path d="M12 12Q8 19 1.600 18a12 12 0 0 1 0-12Q4 13 12 12z" fill="#38b86b"/><path d="M12 12Q4 13 1.600 6A12 12 0 0 1 12 0Q8 4 12 12z" fill="#4a8ff5"/><circle cx="12" cy="12" r="2.500" fill="#fff"/></svg></a>
  <a href="#" class="app run" aria-label="Chrome"><svg viewBox="0 0 24 24"><circle cx="12" cy="12" r="12" fill="#f9c52d"/><path d="M12 12L1.600 6A12 12 0 0 1 22.400 6z" fill="#e23f33"/><path d="M1.600 6A12 12 0 0 0 11 24l5-9-4-3z" fill="#2f9e4f"/><path d="M12 6.500h10.600A12 12 0 0 1 11 24l5.500-9z" fill="#f9c52d"/><circle cx="12" cy="12" r="5.800" fill="#fff"/><circle cx="12" cy="12" r="4.600" fill="#3b7fe8"/></svg></a>
  <a href="#" class="app run multi" aria-label="微信"><svg viewBox="0 0 24 24"><ellipse cx="9" cy="9" rx="9" ry="7.500" fill="#3fb862"/><path d="M3 13l-1 5 5-2z" fill="#3fb862"/><circle cx="6" cy="7" r="1.200" fill="#1d5c34"/><circle cx="12" cy="7" r="1.200" fill="#1d5c34"/><ellipse cx="17" cy="14.500" rx="7" ry="6" fill="#eef0ef"/><path d="M19 19l3 3v-5z" fill="#eef0ef"/><circle cx="14.500" cy="13" r="1" fill="#777"/><circle cx="19.500" cy="13" r="1" fill="#777"/></svg></a>
  <a href="#" class="app run" aria-label="WPS"><svg viewBox="0 0 24 24" fill="none" stroke-width="3.400"><path d="M0 4h9M3 4l6 16 4-10" stroke="#f0412c"/><path d="M10 4h4l3 16 5-17" stroke="#ff5a36"/></svg></a>
  <a href="#" class="app run hot" aria-label="游戏"><svg viewBox="0 0 24 24"><circle cx="12" cy="12" r="12" fill="#e4e3dc"/><path d="M3 19l8-1 8 2-7 4q-6 0-9-5z" fill="#8d8c84"/><path d="M7 6l3 1q1-3 4-3 5 0 5 4 0 3-4 3h-2l1 3 4-1-2 3-2 1 2 3h-5l-2-3-1-5q-3-2-1-6z" fill="#141414"/></svg></a>
  <a href="#" class="app run cur" aria-label="录屏"><svg viewBox="0 0 24 24"><rect width="24" height="24" rx="5" fill="#15181a"/><circle cx="11" cy="12" r="4.500" fill="#e0443c"/><circle cx="11" cy="12" r="6.500" fill="none" stroke="#a8322d" stroke-width="1.200"/><path d="M20 8q-3 4 0 8" fill="none" stroke="#d8403a" stroke-width="1.500"/></svg></a>
</div>
</body>
</html>
